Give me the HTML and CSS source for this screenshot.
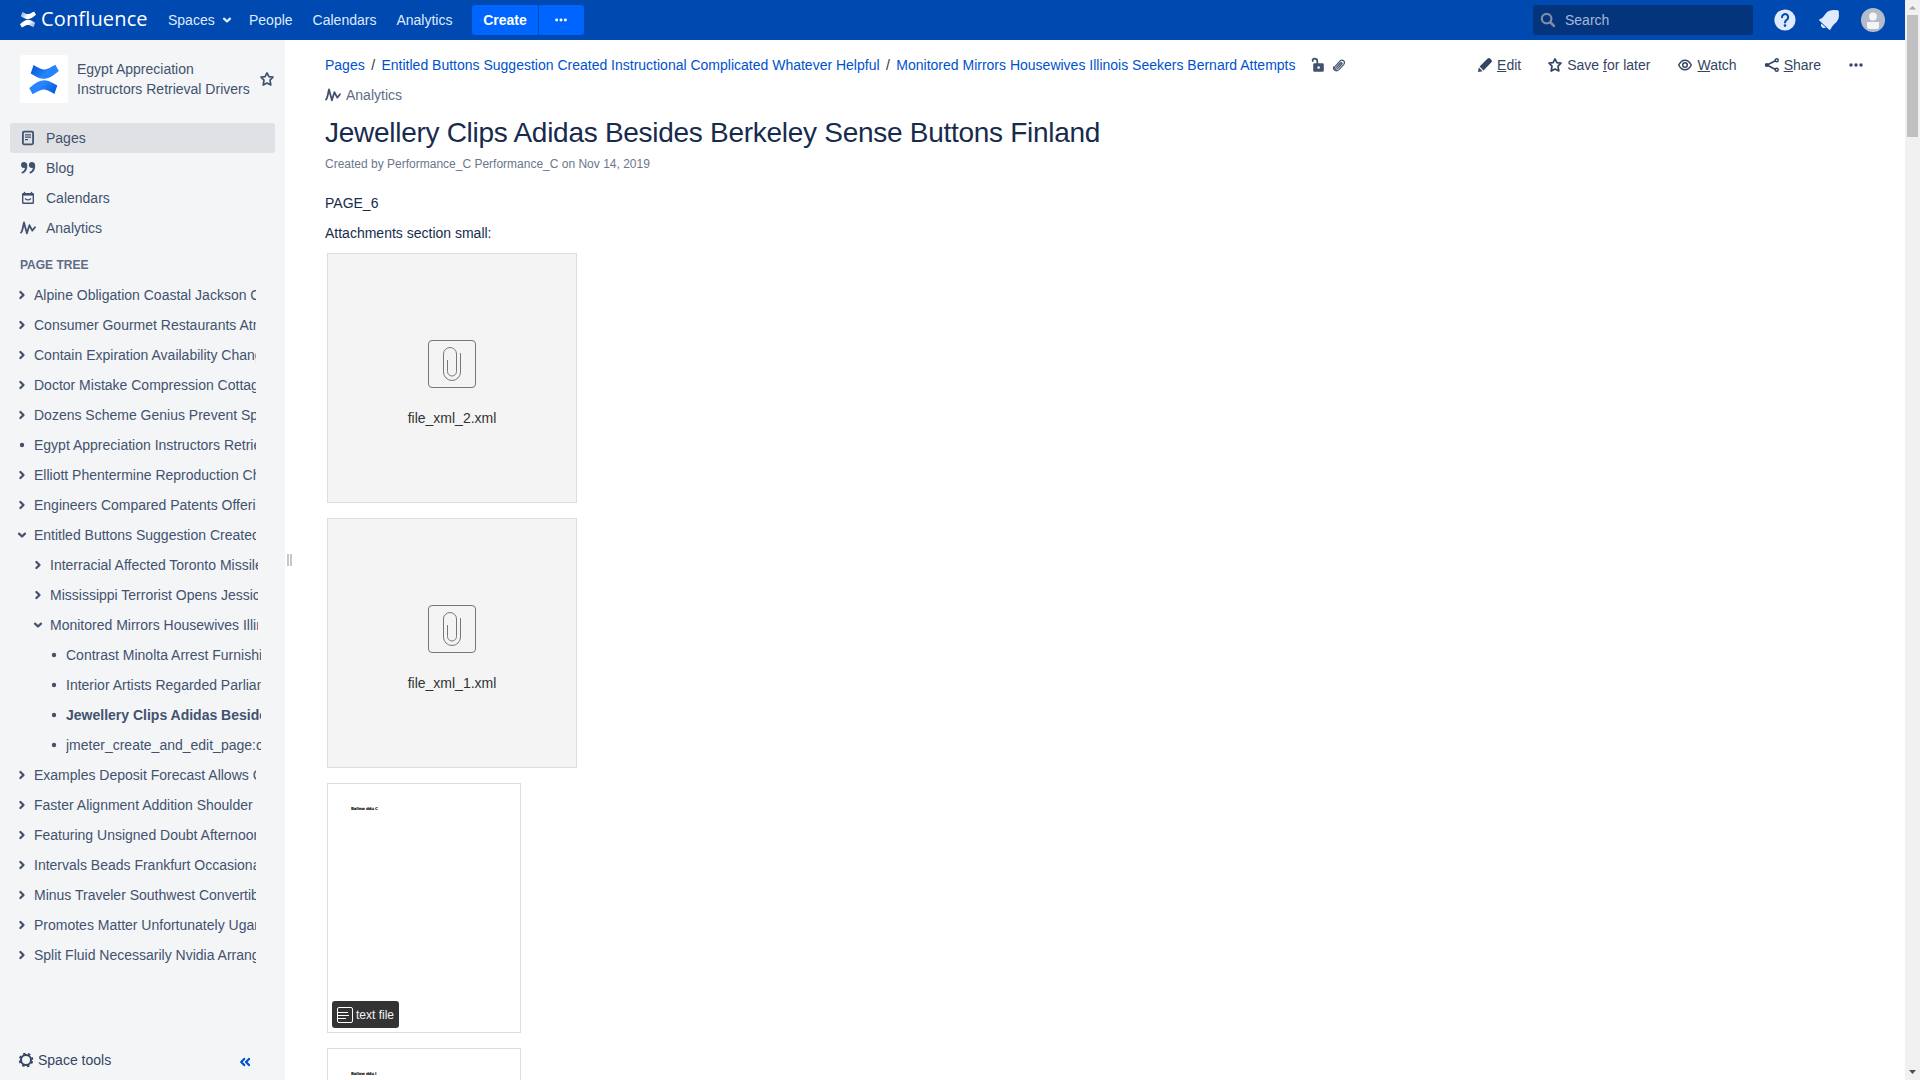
FILE: index.html
```html
<!DOCTYPE html>
<html lang="en">
<head>
<meta charset="utf-8">
<title>Jewellery Clips Adidas Besides Berkeley Sense Buttons Finland - Confluence</title>
<link rel="stylesheet" href="styles.css">
</head>
<body>
<svg class="defs" width="0" height="0" aria-hidden="true">
  <defs>
    <linearGradient id="blue" x1="0" y1="0" x2="1" y2=".5"><stop offset="0" stop-color="#0052cc"/><stop offset=".7" stop-color="#2684ff"/></linearGradient>
    <linearGradient id="white" x1="0" y1="0" x2="1" y2=".4"><stop offset="0" stop-color="#fff" stop-opacity=".45"/><stop offset=".6" stop-color="#fff"/></linearGradient>
    <path id="blade" d="M4.500 1C9 3.500 12 6 16 5.500 20 5 22 3 26.500.8L30 7C24 12 20 15 14 15 9 14.500 6 12 1.500 9.500Z"/>
    <symbol id="right" viewBox="0 0 10 10"><path d="M3.400 2 6.500 5 3.400 8" fill="none" stroke="currentColor" stroke-width="2.300" stroke-linecap="round" stroke-linejoin="round"/></symbol>
    <symbol id="down" viewBox="0 0 10 10"><path d="M2 3.700 5 6.500 8 3.700" fill="none" stroke="currentColor" stroke-width="2.300" stroke-linecap="round" stroke-linejoin="round"/></symbol>
    <symbol id="dot" viewBox="0 0 10 10"><circle cx="5" cy="5" r="2.200" fill="currentColor"/></symbol>
    <symbol id="star" viewBox="0 0 16 16"><path d="M8 1.900 9.900 5.600 14 6.200 11 9.100 11.800 14 8 12 4.200 14 5 9.100 2 6.200 6.100 5.600Z" fill="none" stroke="currentColor" stroke-width="1.700" stroke-linejoin="round"/></symbol>
    <symbol id="pulse" viewBox="0 0 16 16"><path d="M1 12.600C2.600 11.400 3 6 4 2.400L6.900 13.300 9.400 5.200 12.300 10.600 15 7.300" fill="none" stroke="currentColor" stroke-width="1.800" stroke-linecap="round" stroke-linejoin="round"/></symbol>
    <symbol id="more" viewBox="0 0 16 16"><g fill="currentColor"><circle cx="3" cy="8" r="1.700"/><circle cx="8" cy="8" r="1.700"/><circle cx="13" cy="8" r="1.700"/></g></symbol>
    <symbol id="clipfile" viewBox="0 0 48 48"><g fill="none" stroke="#777" stroke-width="1"><rect x=".5" y=".5" width="47" height="47" rx="3.500"/><path d="M19.500 20.500v11a4.500 4.500 0 0 0 9 0v-17.500a6.500 6.500 0 0 0-13 0v18a8.500 8.500 0 0 0 17 0V13.500" stroke-linecap="round"/></g></symbol>
  </defs>
</svg>

<header class="topbar">
  <a class="brand">
    <svg width="16" height="17" viewBox="0 0 30 31.400"><use href="#blade" fill="url(#white)"/><use href="#blade" fill="url(#white)" transform="rotate(180 15 15.700)"/></svg>
    <span class="wordmark">Confluence</span>
  </a>
  <nav class="topnav">
    <a class="spaces">Spaces <svg width="10" height="10"><use href="#down"/></svg></a>
    <a>People</a>
    <a>Calendars</a>
    <a>Analytics</a>
  </nav>
  <div class="create"><a>Create</a><a class="create-more"><svg width="14" height="16" viewBox="0 0 16 16"><use href="#more"/></svg></a></div>
  <div class="search">
    <svg width="16" height="16" viewBox="0 0 16 16"><circle cx="6.600" cy="6.600" r="4.800" fill="none" stroke="currentColor" stroke-width="2.200"/><path d="m10.500 10.500 3.400 3.400" stroke="currentColor" stroke-width="2.700" stroke-linecap="round"/></svg>
    <span>Search</span>
  </div>
  <div class="usertools">
    <svg width="22" height="22" viewBox="0 0 22 22"><circle cx="11" cy="11" r="10.600" fill="#deebff"/><path d="M8 8.200a3.100 3.100 0 1 1 4.900 2.500c-1.200.8-1.900 1.200-1.900 2.700" fill="none" stroke="#0049b0" stroke-width="2" stroke-linecap="round"/><circle cx="11" cy="16.600" r="1.300" fill="#0049b0"/></svg>
    <svg class="bell" width="22" height="22" viewBox="0 0 22 22"><path d="M1.600 10.300C5 8.800 6 6.800 8 4.200 11 .8 15 .8 18 1.200 19.500.4 21.600 2.500 20.800 4 21.200 8 20.800 10.500 18 13.500 15.600 15.800 14 17 12.600 20.200 12.200 21 11.400 21 10.800 20.400L1.400 11.400C.9 10.900 1 10.600 1.600 10.300Z" fill="#deebff"/><path d="M3.400 14.400 7.700 18.400A3 3 0 0 1 3.400 14.400Z" fill="#deebff"/></svg>
    <svg class="avatar" width="24" height="24" viewBox="0 0 24 24"><circle cx="12" cy="12" r="12" fill="#b5bcc9"/><circle cx="12" cy="8.500" r="3.900" fill="#f4f5f7"/><path d="M6 14h12v4.500q0 2.500-2.500 2.500h-7Q6 21 6 18.500Z" fill="#f4f5f7"/></svg>
  </div>
</header>

<div class="body">
  <aside class="sidebar">
    <div class="space">
      <span class="space-logo"><svg width="30" height="31" viewBox="0 0 30 31.400"><use href="#blade" fill="url(#blue)"/><use href="#blade" fill="url(#blue)" transform="rotate(180 15 15.700)"/></svg></span>
      <span class="space-name">Egypt Appreciation<br>Instructors Retrieval Drivers</span>
      <svg class="space-star" width="16" height="16"><use href="#star"/></svg>
    </div>
    <ul class="sidenav">
      <li class="active"><svg width="16" height="16" viewBox="0 0 16 16"><rect x="2.900" y="1.700" width="10.200" height="12.600" rx="1.200" fill="none" stroke="currentColor" stroke-width="1.800"/><path d="M5 4.800h6M5 7.200h6M5 9.600h3" stroke="currentColor" stroke-width="1.200"/></svg>Pages</li>
      <li><svg width="16" height="16" viewBox="0 0 16 16"><path id="quote" d="M4 2a3 3 0 1 0 0 6c.5 0 .7 0 1-.2-.2 1.900-1.300 3.300-3.200 4.300-.8.600-.1 1.600.8 1.300C6 12.300 7.300 9.500 7.300 5.500 7.300 3.300 6 2 4 2Z" fill="currentColor"/><use href="#quote" x="7.900"/></svg>Blog</li>
      <li><svg width="16" height="16" viewBox="0 0 16 16"><rect x="2.700" y="3.600" width="10.600" height="9.700" rx=".6" fill="none" stroke="currentColor" stroke-width="1.400"/><path d="M2.500 4.500h11" stroke="currentColor" stroke-width="2.200"/><path d="M4.500 2.500v2M11.500 2.500v2" stroke="currentColor" stroke-width="1.500" stroke-linecap="round"/><path d="M5 8.500q3 2.800 6 0" fill="none" stroke="currentColor" stroke-width="1.200"/></svg>Calendars</li>
      <li><svg width="16" height="16"><use href="#pulse"/></svg>Analytics</li>
    </ul>
    <h2>PAGE TREE</h2>
    <ul class="tree">
      <li><svg><use href="#right"/></svg><span>Alpine Obligation Coastal Jackson Cookbook</span></li>
      <li><svg><use href="#right"/></svg><span>Consumer Gourmet Restaurants Atmosphere</span></li>
      <li><svg><use href="#right"/></svg><span>Contain Expiration Availability Changing</span></li>
      <li><svg><use href="#right"/></svg><span>Doctor Mistake Compression Cottages</span></li>
      <li><svg><use href="#right"/></svg><span>Dozens Scheme Genius Prevent Specials</span></li>
      <li><svg><use href="#dot"/></svg><span>Egypt Appreciation Instructors Retrieval Drivers</span></li>
      <li><svg><use href="#right"/></svg><span>Elliott Phentermine Reproduction Charity</span></li>
      <li><svg><use href="#right"/></svg><span>Engineers Compared Patents Offering</span></li>
      <li><svg><use href="#down"/></svg><span>Entitled Buttons Suggestion Created Instructional</span></li>
      <li class="level2"><svg><use href="#right"/></svg><span>Interracial Affected Toronto Missile</span></li>
      <li class="level2"><svg><use href="#right"/></svg><span>Mississippi Terrorist Opens Jessica</span></li>
      <li class="level2"><svg><use href="#down"/></svg><span>Monitored Mirrors Housewives Illinois Seekers</span></li>
      <li class="level3"><svg><use href="#dot"/></svg><span>Contrast Minolta Arrest Furnishings</span></li>
      <li class="level3"><svg><use href="#dot"/></svg><span>Interior Artists Regarded Parliament</span></li>
      <li class="level3 current"><svg><use href="#dot"/></svg><span>Jewellery Clips Adidas Besides Berkeley</span></li>
      <li class="level3"><svg><use href="#dot"/></svg><span>jmeter_create_and_edit_page:create</span></li>
      <li><svg><use href="#right"/></svg><span>Examples Deposit Forecast Allows Compare</span></li>
      <li><svg><use href="#right"/></svg><span>Faster Alignment Addition Shoulder</span></li>
      <li><svg><use href="#right"/></svg><span>Featuring Unsigned Doubt Afternoon</span></li>
      <li><svg><use href="#right"/></svg><span>Intervals Beads Frankfurt Occasional</span></li>
      <li><svg><use href="#right"/></svg><span>Minus Traveler Southwest Convertible</span></li>
      <li><svg><use href="#right"/></svg><span>Promotes Matter Unfortunately Uganda</span></li>
      <li><svg><use href="#right"/></svg><span>Split Fluid Necessarily Nvidia Arrange</span></li>
    </ul>
    <div class="space-tools">
      <svg width="16" height="16" viewBox="0 0 16 16"><circle cx="8" cy="8" r="5" fill="none" stroke="currentColor" stroke-width="2"/><circle cx="8" cy="8" r="6.400" fill="none" stroke="currentColor" stroke-width="1.700" stroke-dasharray="2.500 2.526" stroke-dashoffset="-1.260"/></svg>
      <span>Space tools</span>
      <svg class="collapse" width="12" height="10" viewBox="0 0 12 10"><path d="M5.200 1.900 2.200 5l3 3.100M10 1.900 7 5l3 3.100" fill="none" stroke="currentColor" stroke-width="2.200" stroke-linecap="round" stroke-linejoin="round"/></svg>
    </div>
  </aside>
  <div class="splitter"><i></i><i></i></div>

  <main>
    <div class="pagebar">
      <div class="crumbs">
        <a>Pages</a><b>/</b><a>Entitled Buttons Suggestion Created Instructional Complicated Whatever Helpful</a><b>/</b><a>Monitored Mirrors Housewives Illinois Seekers Bernard Attempts</a>
        <svg class="lock" width="14" height="16" viewBox="0 0 14 16"><path d="M1.800 4.200C1 2.800 2.300 1.700 3.600 1.700s2.700.9 2.700 2.600V7" fill="none" stroke="currentColor" stroke-width="1.700" stroke-linecap="round"/><path d="M3.500 6.200h8A1.300 1.300 0 0 1 12.800 7.500v6a1.300 1.300 0 0 1-1.300 1.300h-8a1.300 1.300 0 0 1-1.300-1.300v-6a1.300 1.300 0 0 1 1.300-1.300ZM7.600 9.200a1.300 1.300 0 1 0 .01 0Z" fill="currentColor" fill-rule="evenodd"/></svg>
        <svg class="paperclip" width="14" height="16" viewBox="0 0 14 16"><path d="M4.600 10.200 8.500 6c1-1 2 0 1.200 1l-4 4.400c-1.800 1.700-4-.2-2.300-2.200l4.300-4.900c2.700-2.800 6.300.4 3.900 3.300l-4.900 5.300c-2.700 2.400-6-.3-5-3" fill="none" stroke="currentColor" stroke-width="1.200" stroke-linecap="round"/></svg>
      </div>
      <div class="actions">
        <a><svg width="16" height="16" viewBox="0 0 16 16"><path d="m1 15 .8-4.600 3.800 3.800ZM2.600 9.500l7.800-7.700c1-1 2-1 2.900-.1l1 1c.9.900.9 1.900-.1 2.900l-7.700 7.800Z" fill="currentColor"/></svg><span><u>E</u>dit</span></a>
        <a class="save"><svg width="16" height="16"><use href="#star"/></svg><span>Save <u>f</u>or later</span></a>
        <a><svg width="16" height="16" viewBox="0 0 16 16"><path d="M1.700 8Q4.200 3.200 8 3.200T14.300 8Q11.800 12.800 8 12.800T1.700 8Z" fill="none" stroke="currentColor" stroke-width="1.500"/><circle cx="8" cy="8" r="2.300" fill="none" stroke="currentColor" stroke-width="1.500"/></svg><span><u>W</u>atch</span></a>
        <a><svg width="16" height="16" viewBox="0 0 16 16"><path d="m12 3.500-9 4.500 9 4.700" fill="none" stroke="currentColor" stroke-width="1.600"/><g fill="#fff" stroke="currentColor" stroke-width="1.500"><circle cx="12.700" cy="3.300" r="1.500"/><circle cx="2.800" cy="8" r="1.300" fill="currentColor"/><circle cx="12.700" cy="12.700" r="1.500"/></g></svg><span><u>S</u>hare</span></a>
        <a><svg width="16" height="16"><use href="#more"/></svg></a>
      </div>
    </div>
    <div class="analytics"><svg width="16" height="16"><use href="#pulse"/></svg>Analytics</div>
    <h1>Jewellery Clips Adidas Besides Berkeley Sense Buttons Finland</h1>
    <p class="meta">Created by Performance_C Performance_C on Nov 14, 2019</p>
    <p class="text">PAGE_6</p>
    <p class="text">Attachments section small:</p>
    <div class="files">
      <div class="file unknown"><svg width="48" height="48"><use href="#clipfile"/></svg><span>file_xml_2.xml</span></div>
      <div class="file unknown"><svg width="48" height="48"><use href="#clipfile"/></svg><span>file_xml_1.xml</span></div>
      <div class="file doc"><small>Ballow ddu C</small><span class="badge"><svg width="16" height="16" viewBox="0 0 16 16"><g fill="none" stroke="#fff"><rect x=".5" y=".5" width="15" height="15" rx="1.500"/><path d="M1 5.500h10M1 8.500h11M1 11.500h8"/></g></svg>text file</span></div>
      <div class="file doc"><small>Ballow ddu I</small></div>
    </div>
  </main>
</div>
<div class="scrollbar">
  <svg width="15" height="15" viewBox="0 0 15 15"><path d="M4 9.500 7.500 6 11 9.500Z" fill="#a3a3a3"/></svg>
  <div class="thumb"></div>
  <svg class="arrow-down" width="15" height="15" viewBox="0 0 15 15"><path d="M4 5h7L7.500 9Z" fill="#505050"/></svg>
</div>
</body>
</html>
```
FILE: styles.css
```css
* { box-sizing: border-box; }
html, body { margin: 0; height: 100%; overflow: hidden; }
body {
  display: grid;
  grid-template-columns: 1905px 15px;
  grid-template-rows: 40px 1040px;
  background: #fff;
  color: #172b4d;
  font: 14px/20px "Liberation Sans", Arial, sans-serif;
}
ul { list-style: none; margin: 0; padding: 0; }
svg { display: block; flex: none; }
.defs { position: absolute; }
h1, h2, p { margin: 0; }

.topbar { grid-column: 1; display: flex; align-items: center; padding-left: 20px; background: #0049b0; color: #deebff; }
.brand { display: flex; align-items: center; gap: 5px; width: 148px; color: #fff; }
.brand svg { margin-top: -1px; }
.wordmark { margin-top: -2px; font: 20px/40px "Open Sans", sans-serif; letter-spacing: .15px; }
.topnav { display: flex; gap: 20px; }
.spaces { display: flex; align-items: center; gap: 7px; width: 61px; }
.create { display: flex; gap: 1px; margin-left: 20px; color: #fff; font-weight: bold; }
.create a { width: 66px; height: 30px; padding-right: 1px; line-height: 30px; text-align: center; background: #0065ff; border-radius: 3px 0 0 3px; }
.create .create-more { display: grid; place-items: center; width: 45px; padding-right: 2px; border-radius: 0 3px 3px 0; }
.search { display: flex; align-items: center; gap: 16px; width: 220px; height: 30px; margin-left: auto; padding-left: 7px; border-radius: 3px; background: #04347c; color: #a4b9da; }
.search svg { color: #7d8ca8; margin-right: -7px; }
.usertools { display: flex; align-items: center; width: 152px; padding-left: 21px; }
.bell { margin-left: 22px; }
.avatar { margin-left: 21px; }

.body { grid-column: 1; display: flex; height: 1040px; }
.sidebar { display: flex; flex-direction: column; width: 285px; padding-top: 15px; background: #f4f5f7; color: #42526e; }
.space { display: flex; align-items: center; height: 48px; padding-left: 20px; }
.space-logo { display: grid; place-items: center; width: 48px; height: 48px; border-radius: 3px; background: #fff; }
.space-name { width: 182px; padding-left: 9px; white-space: nowrap; }
.space-star { margin-left: 9px; }
.sidenav { margin: 20px 10px 0; }
.sidenav li { display: flex; align-items: center; gap: 10px; height: 30px; padding-left: 10px; border-radius: 3px; }
.sidenav .active { background: #dfe1e5; }
.sidebar h2 { margin: 12px 0 0 20px; font-size: 12px; line-height: 20px; color: #5e6c84; }
.tree { margin-top: 5px; }
.tree li { display: flex; align-items: center; gap: 7px; height: 30px; padding-left: 17px; width: 256px; }
.tree svg { width: 10px; height: 10px; }
.tree span { overflow: hidden; white-space: nowrap; }
.tree .level2 { padding-left: 33px; width: 258px; }
.tree .level3 { padding-left: 49px; width: 261px; }
.current { font-weight: bold; }
.space-tools { display: flex; align-items: center; margin-top: auto; height: 40px; padding-left: 18px; gap: 4px; color: #344563; }
.collapse { margin: 4px 0 0 124px; color: #0052cc; }
.splitter { display: flex; gap: 1px; width: 10px; padding: 514px 0 0 2px; }
.splitter i { width: 2px; height: 12px; background: #c1c7d0; }

main { flex: 1; padding: 10px 41px 0 30px; overflow: hidden; }
.pagebar { display: flex; justify-content: space-between; height: 30px; align-items: center; }
.crumbs { display: flex; align-items: center; color: #0052cc; white-space: nowrap; }
.crumbs b { width: 16.8px; text-align: center; font-weight: normal; color: #333; }
.crumbs svg { color: #42526e; }
.crumbs .lock { margin-left: 15px; }
.crumbs .paperclip { margin-left: 7px; }
.actions { display: flex; gap: 27px; color: #344563; }
.actions a { display: flex; align-items: center; gap: 4px; }
.actions .save { margin-left: -1px; }
.analytics { display: flex; align-items: center; gap: 5px; height: 30px; color: #5e6c84; }
.analytics svg { color: #42526e; }
h1 { margin-top: 7px; font-size: 28px; line-height: 32px; font-weight: normal; letter-spacing: -.28px; }
.meta { margin-top: 5px; font-size: 12px; color: #6b778c; }
.text { margin-top: 10px; }
.meta + .text { margin-top: 19px; }
.files { display: flex; flex-direction: column; gap: 15px; padding: 10px 0 0 2px; }
.file { flex: none; width: 250px; height: 250px; border: 1px solid #ddd; }
.unknown { display: flex; flex-direction: column; align-items: center; gap: 20px; padding-top: 86px; background: #f4f4f4; color: #333; }
.doc { display: flex; flex-direction: column; justify-content: space-between; align-items: flex-start; width: 194px; padding: 22px 4px 4px; background: #fff; }
.doc small { margin-left: 19px; font: bold 4px/5px "DejaVu Sans", sans-serif; letter-spacing: -.2px; color: #000; }
.badge { display: flex; align-items: center; gap: 3px; width: 67px; height: 27px; padding-left: 5px; border-radius: 3px; background: #333; color: #f4f4f4; font-size: 12px; white-space: nowrap; }

.scrollbar { grid-column: 2; grid-row: 1 / 3; display: flex; flex-direction: column; background: #f1f1f1; }
.thumb { width: 11px; height: 122px; margin-left: 2px; background: #c1c1c1; }
.arrow-down { margin-top: auto; }
```
